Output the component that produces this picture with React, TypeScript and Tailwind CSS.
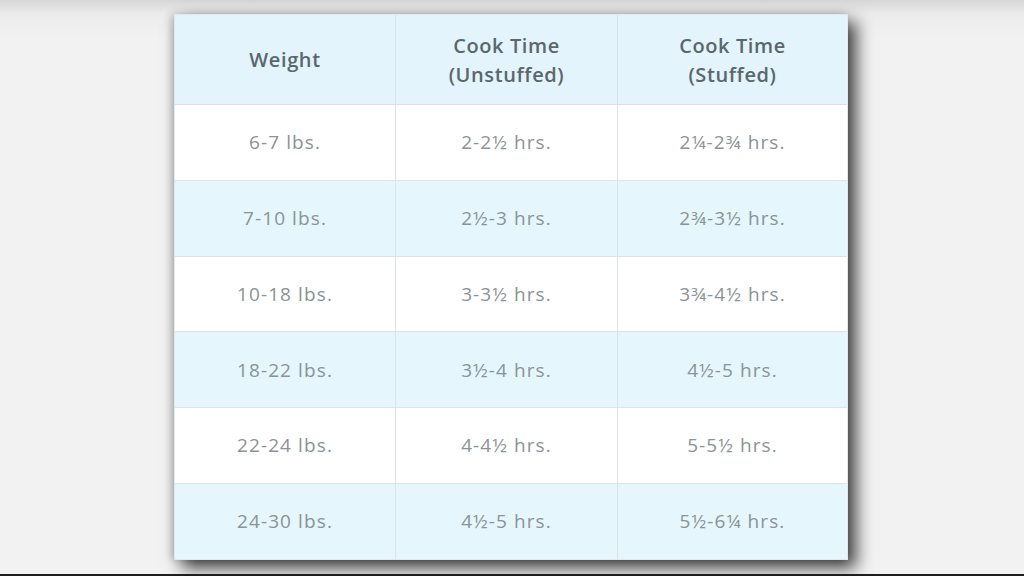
const rows: [string, string, string][] = [
  ["6-7 lbs.", "2-2½ hrs.", "2¼-2¾ hrs."],
  ["7-10 lbs.", "2½-3 hrs.", "2¾-3½ hrs."],
  ["10-18 lbs.", "3-3½ hrs.", "3¾-4½ hrs."],
  ["18-22 lbs.", "3½-4 hrs.", "4½-5 hrs."],
  ["22-24 lbs.", "4-4½ hrs.", "5-5½ hrs."],
  ["24-30 lbs.", "4½-5 hrs.", "5½-6¼ hrs."],
];

export default function App() {
  return (
    <div
      className="w-[1024px] h-[576px] flex flex-col bg-[linear-gradient(to_bottom,#d6d6d6_0px,#ececec_14px,#f2f2f2_40px)] overflow-hidden"
      style={{ fontFamily: '"Open Sans", "Noto Sans", sans-serif' }}
    >
      <div className="flex-1 pt-[14px] pl-[174px]">
        <div className="w-[674px] h-[546px] bg-white border border-[#e2e8ea] shadow-[8px_8px_16px_rgba(0,0,0,0.75),-3px_0_8px_rgba(0,0,0,0.18)] flex flex-col">
          <div className="grid grid-cols-[221px_222px_1fr] h-[90px] bg-[#e3f4fc] border-b border-[#d8e2e6] text-[#5b676c] font-semibold text-[20px] leading-[29px] tracking-[0.6px]">
            <div className="flex items-center justify-center text-center border-r border-[#d8e2e6]">Weight</div>
            <div className="flex items-center justify-center text-center border-r border-[#d8e2e6]">
              Cook Time
              <br />
              (Unstuffed)
            </div>
            <div className="flex items-center justify-center text-center">
              Cook Time
              <br />
              (Stuffed)
            </div>
          </div>
          {rows.map((r, i) => (
            <div
              key={r[0]}
              className={`grid grid-cols-[221px_222px_1fr] flex-1 text-[19px] text-[#8a9397] tracking-[1.1px] ${
                i % 2 === 1 ? "bg-[#e5f6fd]" : "bg-white"
              } ${i < rows.length - 1 ? "border-b border-[#dde4e7]" : ""}`}
            >
              <div className="flex items-center justify-center border-r border-[#dde4e7]">{r[0]}</div>
              <div className="flex items-center justify-center border-r border-[#dde4e7]">{r[1]}</div>
              <div className="flex items-center justify-center">{r[2]}</div>
            </div>
          ))}
        </div>
      </div>
      <div className="h-[2px] bg-[#1e1e1e]" />
    </div>
  );
}
